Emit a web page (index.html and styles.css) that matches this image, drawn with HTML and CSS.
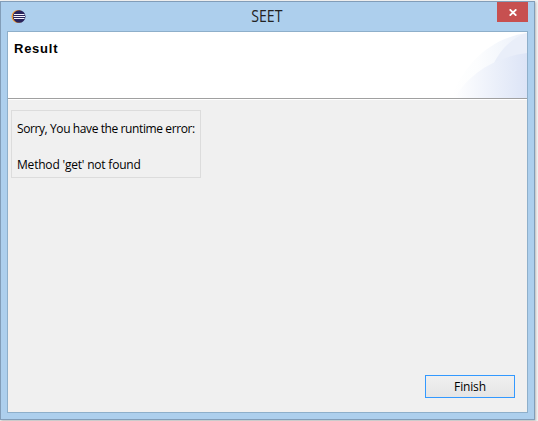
FILE: index.html
```html
<!DOCTYPE html>
<html lang="en">
<head>
<meta charset="utf-8">
<title>SEET</title>
<link rel="stylesheet" href="styles.css">
</head>
<body>
<main class="window">
  <header class="titlebar">
    <svg class="app-icon" width="16" height="16" viewBox="0 0 16 16">
      <circle cx="7" cy="7.5" r="6.5" fill="#f49a32"/>
      <circle cx="8.2" cy="7.5" r="6.3" fill="#29245c"/>
      <path d="M3 5.5h10.5M2.5 7.5h11.5M3 9.5h10.5" stroke="#f4f4fb" stroke-width="1"/>
    </svg>
    <h1 class="title">SEET</h1>
    <button class="close" aria-label="Close">
      <svg width="8" height="7" viewBox="0 0 8 7"><path d="M.7 .3L7.3 6.7M7.3 .3L.7 6.7" stroke="#fff" stroke-width="1.8"/></svg>
    </button>
  </header>
  <section class="client">
    <div class="banner">
      <h2 class="heading">Result</h2>
      <svg class="swoosh" width="76" height="66" viewBox="0 0 76 66">
        <defs>
          <linearGradient id="back" x1="0" x2="1"><stop offset="0" stop-color="#fff"/><stop offset=".35" stop-color="#fcfdfe"/><stop offset="1" stop-color="#ebf0fa"/></linearGradient>
          <linearGradient id="front" x1="0" x2="1"><stop offset="0" stop-color="#fff"/><stop offset="1" stop-color="#dce4f6"/></linearGradient>
        </defs>
        <path d="M0 66C12 34 38 6 76 1V66Z" fill="url(#back)"/>
        <path d="M42 33C49 18 60 6 76 1V21C63 23 52 27 42 33Z" fill="#e9eef9"/>
        <path d="M3 66C18 42 43 25 76 21V66Z" fill="url(#front)"/>
      </svg>
    </div>
    <div class="message">
      <p class="line first">Sorry, You have the runtime error:</p>
      <p class="line second">Method 'get' not found</p>
    </div>
    <footer class="actions"><button class="finish">Finish</button></footer>
  </section>
</main>
</body>
</html>
```
FILE: styles.css
```css
* { box-sizing: border-box; }
body {
  margin: 0;
  padding-top: 1px;
  height: 421px;
  overflow: hidden;
  background: #f3f3f3;
  font-family: "Open Sans", "Noto Sans", sans-serif;
  color: #000;
}
h1, h2, p { margin: 0; font-weight: 400; }
button { font-family: inherit; color: #000; padding: 0; }
.window {
  width: 535px;
  height: 419px;
  display: flex;
  flex-direction: column;
  padding: 0 6px 6px;
  border: 1px solid #829db8;
  background: #adcfed;
  box-shadow: 1px 1px 2px #bbb;
}
.titlebar {
  display: grid;
  grid-template-columns: 16px 1fr 31px;
  height: 29px;
  padding-left: 4px;
}
.app-icon { margin-top: 7px; }
.title {
  padding-left: 11px;
  font-size: 16px;
  line-height: 29px;
  text-align: center;
  color: #222;
  transform: scaleX(.88);
}
.close {
  width: 31px;
  height: 20px;
  border: 0;
  background: #c75050;
  display: flex;
  align-items: center;
  justify-content: center;
}
.client {
  flex: 1;
  display: flex;
  flex-direction: column;
  border: 1px solid #8eafca;
  background: #f0f0f0;
}
.banner {
  display: flex;
  justify-content: space-between;
  height: 67px;
  background: #fff;
  border-bottom: 1px solid #a0a0a0;
  box-shadow: 0 1px #fff;
}
.heading {
  padding: 9px 0 0 6px;
  font: bold 13px/16px "Liberation Sans", sans-serif;
  letter-spacing: .75px;
}
.message {
  width: 190px;
  height: 68px;
  margin: 11px 0 0 3px;
  padding: 9px 0 0 5px;
  border: 1px solid #dcdcdc;
}
.line {
  font-size: 12px;
  line-height: 18px;
  white-space: nowrap;
}
.first { letter-spacing: -.4px; }
.second { margin-top: 18px; letter-spacing: -.2px; }
.actions { display: flex; justify-content: flex-end; margin: auto 12px 14px 0; }
.finish {
  width: 90px;
  height: 23px;
  border: 1px solid #3399ff;
  background: linear-gradient(#f0f0f0, #e5e5e5);
  font-size: 12px;
  line-height: 20px;
  letter-spacing: -.15px;
}
```
